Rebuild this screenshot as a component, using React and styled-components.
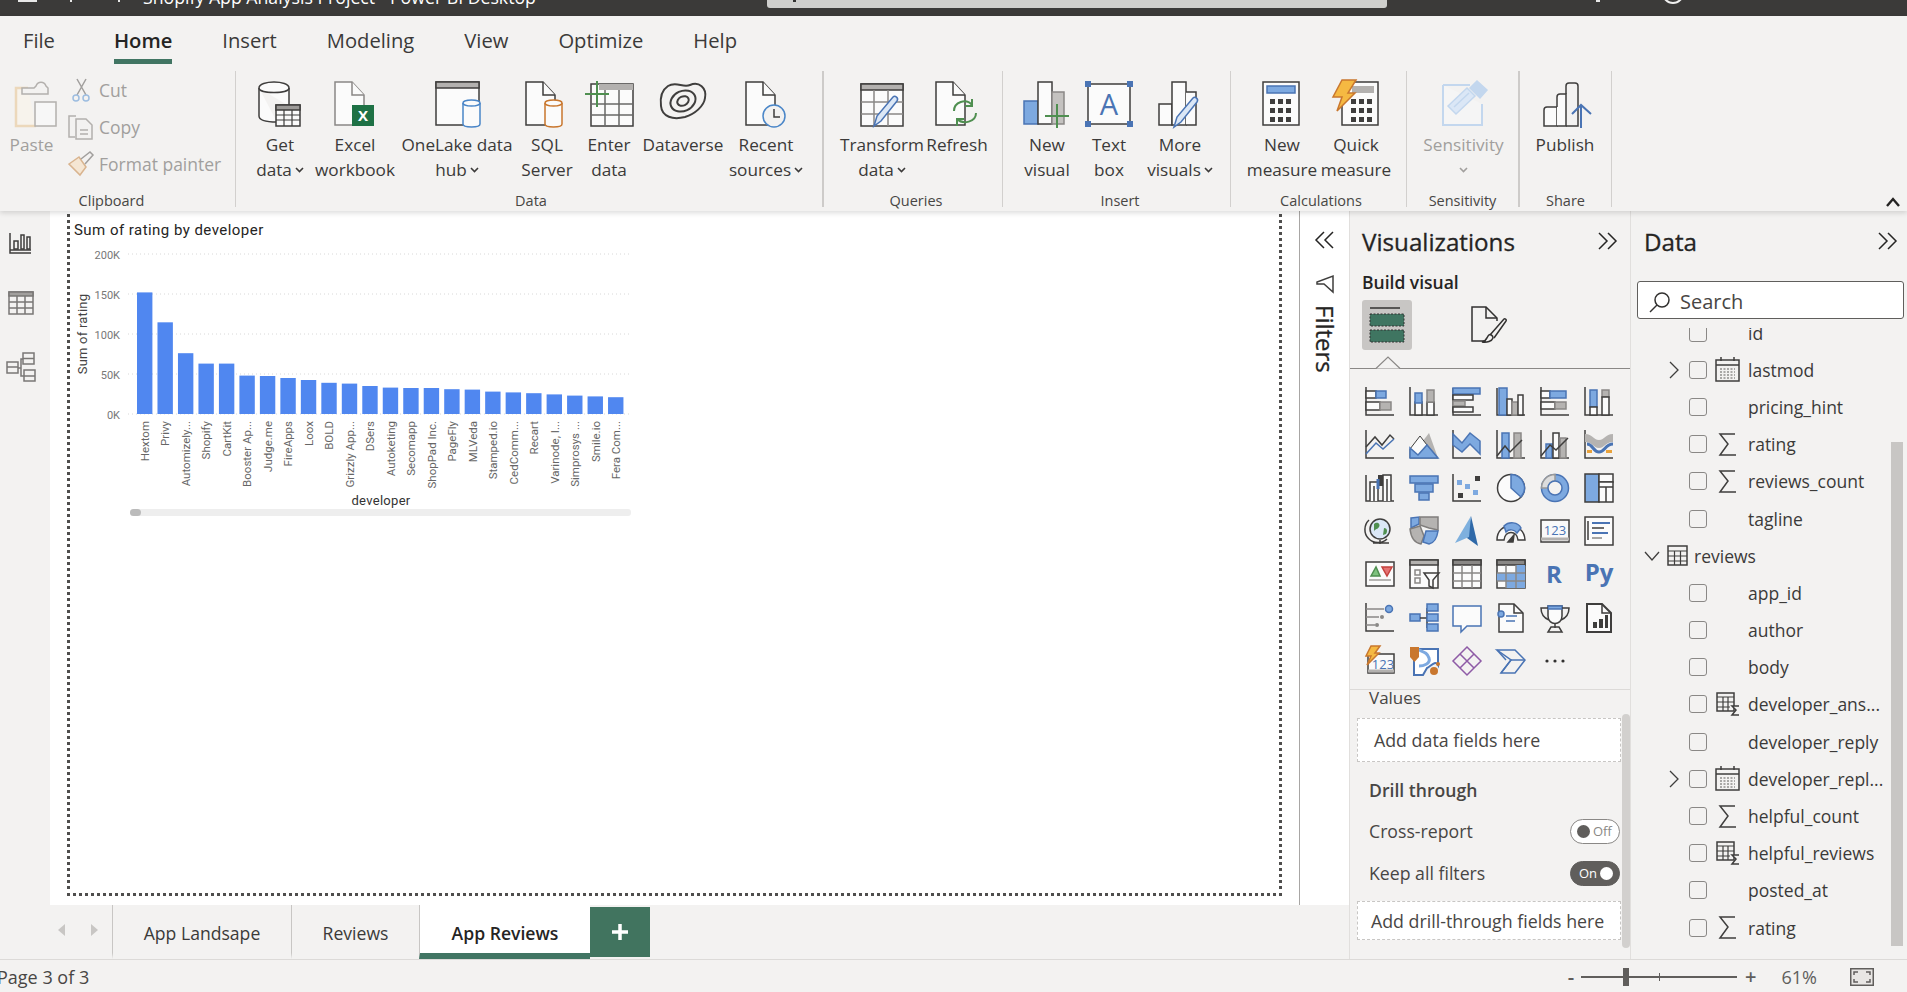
import React from "react";
import styled, { createGlobalStyle } from "styled-components";

const D = "#3f3e3d";
const M = "#605e5c";
const B = "#7da9e0";
const BS = "#4a74b4";
const G = "#b5b3b1";
const W = "#fbfbfb";
const GR = "#4f8f50";

const GlobalStyle = createGlobalStyle`
  html, body { margin: 0; padding: 0; background: #f3f2f1; overflow: hidden; }
  body { font-family: "Open Sans", "Noto Sans", sans-serif; color: #323130; }
`;

const App_ = styled.div`
  width: 1907px;
  height: 992px;
  display: flex;
  flex-direction: column;
  overflow: hidden;
  background: #f3f2f1;
`;

const TitleBar = styled.div`
  height: 16px;
  flex: none;
  background: #3b3a39;
  display: flex;
  overflow: hidden;
`;
const TitleBit = styled.div`
  width: ${p => p.$w}px;
  height: ${p => p.$h}px;
  margin-left: ${p => p.$ml}px;
  background: #e8e8e8;
  flex: none;
`;
const TitleText = styled.div`
  margin: -14px 0 0 ${p => p.$ml}px;
  width: 624px;
  color: #fff;
  font-size: 17.7px;
  line-height: 22px;
  white-space: nowrap;
  flex: none;
`;
const TitleSearch = styled.div`
  width: 620px;
  height: 8px;
  flex: none;
  background: #cfcfcd;
  border-radius: 0 0 3px 3px;
  padding-left: 26px;
  box-sizing: border-box;
`;
const TitleSearchMark = styled.div`
  width: 3px;
  height: 2px;
  background: #323130;
`;
const TitleAvatar = styled.div`
  width: 22px;
  height: 22px;
  margin: -18px 0 0 62px;
  border-radius: 50%;
  border: 2px solid #f0f0f0;
  box-sizing: border-box;
  flex: none;
`;

const Ribbon = styled.div`
  height: 195px;
  flex: none;
  background: #f3f2f1;
  box-shadow: 0 2px 5px rgba(0, 0, 0, 0.14);
  position: relative;
  z-index: 5;
`;
const TabBar = styled.div`
  height: 52px;
  padding-left: 23px;
  display: flex;
  gap: 50px;
`;
const Tab = styled.div`
  height: 48px;
  box-sizing: border-box;
  padding-top: 9px;
  font-size: 20.2px;
  line-height: 30px;
  color: ${p => (p.$active ? "#252423" : "#3b3a39")};
  font-weight: ${p => (p.$active ? 600 : 400)};
  border-bottom: 5px solid ${p => (p.$active ? "#417563" : "transparent")};
  margin-right: ${p => (p.$first ? "9px" : "0")};
`;
const Groups = styled.div`
  display: flex;
  margin-top: 3px;
  height: 136px;
`;
const Group = styled.div`
  width: ${p => p.$w}px;
  flex: none;
  box-sizing: border-box;
  padding-left: ${p => p.$pad || 0}px;
  border-right: ${p => (p.$thick ? "2px solid #cdcbc9" : "1px solid #d2d0ce")};
  display: flex;
  flex-direction: column;
  position: relative;
`;
const GroupBody = styled.div`
  flex: 1;
  min-height: 0;
  display: flex;
`;
const GroupLabel = styled.div`
  height: 22px;
  margin-bottom: -5px;
  margin-left: ${p => (p.$shift ? -p.$shift : 0)}px;
  text-align: center;
  font-size: 14.5px;
  line-height: 22px;
  color: #484644;
  flex: none;
`;
const RibbonBtn = styled.div`
  width: ${p => p.$w}px;
  flex: none;
  display: flex;
  flex-direction: column;
  align-items: center;
  color: ${p => (p.$off ? "#a19f9d" : "#3b3a39")};
`;
const IconSlot = styled.div`
  height: 48px;
  margin: 9px 0 4px;
  display: flex;
  justify-content: center;
`;
const BtnLine = styled.div`
  height: 25px;
  font-size: 17.2px;
  line-height: 25px;
  white-space: nowrap;
  display: flex;
  align-items: center;
  gap: 3px;
`;
const Stack = styled.div`
  margin-left: 15px;
  display: flex;
  flex-direction: column;
`;
const StackRow = styled.div`
  display: flex;
  align-items: center;
  height: 37px;
  gap: 5px;
  font-size: 17.5px;
  color: #a19f9d;
  white-space: nowrap;
`;
const StackIcon = styled.div`
  width: 26px;
  flex: none;
  display: flex;
  justify-content: center;
`;
const Collapse = styled.div`
  position: absolute;
  left: 1886px;
  top: 174px;
`;

const Main = styled.div`
  flex: 1;
  display: flex;
  min-height: 0;
`;
const LeftCol = styled.div`
  width: 1349px;
  flex: none;
  display: flex;
  flex-direction: column;
`;
const WorkRow = styled.div`
  flex: 1;
  display: flex;
  min-height: 0;
`;
const Rail = styled.div`
  width: 50px;
  flex: none;
  padding: 22px 9px 0 0;
  box-sizing: border-box;
  display: flex;
  flex-direction: column;
  align-items: center;
  gap: 37px;
`;
const Canvas = styled.div`
  flex: 1;
  background: #fff;
  padding: 0 17px 9px;
  display: flex;
  min-width: 0;
`;
const Frame = styled.div`
  flex: 1;
  margin-top: -10px;
  border: 3px dotted #4f4e4d;
  position: relative;
`;
const Visual = styled.svg`
  position: absolute;
  left: 0;
  top: 16px;
  font-family: Roboto, "Liberation Sans", sans-serif;
`;
const FiltersPane = styled.div`
  width: 50px;
  flex: none;
  background: #fff;
  border-left: 1px solid #a8a6a4;
  box-sizing: border-box;
  display: flex;
  flex-direction: column;
  align-items: center;
  padding-top: 19px;
`;
const Funnel = styled.div`
  margin-top: 25px;
  display: flex;
`;
const FiltersText = styled.div`
  writing-mode: vertical-rl;
  font-size: 24px;
  line-height: 26px;
  font-weight: 500;
  -webkit-text-stroke: 0.3px #252423;
  margin-top: 12px;
  color: #252423;
`;

const TabStrip = styled.div`
  height: 54px;
  flex: none;
  display: flex;
  box-sizing: border-box;
`;
const NavArrows = styled.div`
  width: 112px;
  flex: none;
  box-sizing: border-box;
  padding-left: 58px;
  display: flex;
  align-items: center;
  gap: 26px;
  padding-bottom: 4px;
`;
const PageTab = styled.div`
  width: ${p => p.$w}px;
  flex: none;
  box-sizing: border-box;
  display: flex;
  align-items: center;
  justify-content: center;
  border-left: 1px solid #c8c6c4;
  font-size: 17.6px;
  font-weight: ${p => (p.$active ? 600 : 400)};
  color: ${p => (p.$active ? "#252423" : "#3b3a39")};
  background: ${p => (p.$active ? "#fff" : "transparent")};
  border-bottom: 6px solid ${p => (p.$active ? "#417563" : "transparent")};
  padding-top: 8px;
`;
const AddTab = styled.div`
  width: 60px;
  height: 50px;
  margin-top: 2px;
  flex: none;
  background: #41745f;
  color: #fff;
  display: flex;
  align-items: center;
  justify-content: center;
`;

const Pane = styled.div`
  width: ${p => p.$w}px;
  flex: none;
  box-sizing: border-box;
  border-left: 1px solid #e1dfdd;
  display: flex;
  flex-direction: column;
  position: relative;
  overflow: hidden;
`;
const PaneHead = styled.div`
  height: 60px;
  flex: none;
  box-sizing: border-box;
  padding: 0 ${p => p.$r}px 0 ${p => p.$l}px;
  display: flex;
  align-items: center;
  justify-content: space-between;
  font-size: 24.2px;
  font-weight: 500;
  -webkit-text-stroke: 0.3px #252423;
  color: #252423;
`;
const BuildLabel = styled.div`
  height: 22px;
  line-height: 22px;
  padding-left: 12px;
  font-size: 17.5px;
  font-weight: 600;
  color: #252423;
`;
const BuildTabs = styled.div`
  display: flex;
  align-items: center;
  margin: 7px 0 0 12px;
  height: 50px;
`;
const BuildSelected = styled.div`
  width: 50px;
  height: 50px;
  background: #c8c6c4;
  border-radius: 3px;
  display: flex;
  align-items: center;
  justify-content: center;
`;
const BuildOther = styled.div`
  margin-left: 58px;
  display: flex;
`;
const NotchLine = styled.div`
  margin-top: 18px;
  height: 1px;
  background: #8a8886;
  position: relative;
  flex: none;
`;
const NotchMark = styled.svg`
  position: absolute;
  left: 25px;
  top: -12px;
`;
const VizGrid = styled.div`
  display: grid;
  grid-template-columns: repeat(6, 43.8px);
  grid-auto-rows: 43.2px;
  padding: 11px 0 0 8px;
  height: 320px;
  box-sizing: border-box;
  place-items: center;
  flex: none;
`;
const Rule = styled.div`
  height: 1px;
  flex: none;
  background: #dcdad8;
`;
const Values = styled.div`
  height: 16px;
  line-height: 16px;
  padding-left: 19px;
  font-size: 17px;
  color: #484644;
  flex: none;
`;
const DropBox = styled.div`
  width: 264px;
  height: ${p => p.$h}px;
  margin: ${p => p.$mt}px 0 0 7px;
  box-sizing: border-box;
  background: #fff;
  border: 1px dashed #c8c6c4;
  display: flex;
  align-items: center;
  padding-left: ${p => p.$pl}px;
  font-size: 17.8px;
  color: #484644;
  flex: none;
`;
const DrillHead = styled.div`
  height: 28px;
  margin-top: 14px;
  line-height: 28px;
  padding-left: 19px;
  font-size: 17.6px;
  font-weight: 600;
  color: #484644;
  flex: none;
`;
const OptionRow = styled.div`
  width: 251px;
  height: 26px;
  margin: ${p => p.$mt}px 0 0 19px;
  display: flex;
  align-items: center;
  justify-content: space-between;
  font-size: 17.7px;
  color: #484644;
  flex: none;
`;
const Toggle = styled.div`
  width: 50px;
  height: 25px;
  box-sizing: border-box;
  border-radius: 13px;
  border: 1px solid ${p => (p.$on ? "#605e5c" : "#8a8886")};
  background: ${p => (p.$on ? "#605e5c" : "#fff")};
  color: ${p => (p.$on ? "#fff" : "#8a8886")};
  font-size: 13px;
  display: flex;
  align-items: center;
  justify-content: ${p => (p.$on ? "flex-end" : "flex-start")};
  gap: 3px;
  padding: 0 6px;
`;
const Dot = styled.span`
  width: 13px;
  height: 13px;
  border-radius: 50%;
  background: ${p => (p.$on ? "#fff" : "#605e5c")};
  flex: none;
`;
const ScrollThumb = styled.div`
  position: absolute;
  right: ${p => p.$r}px;
  top: ${p => p.$t}px;
  height: ${p => p.$h}px;
  width: ${p => p.$w}px;
  border-radius: ${p => p.$rad || 0}px;
  background: ${p => p.$c};
`;
const SearchBox = styled.div`
  width: 267px;
  height: 38px;
  margin: 10px 0 0 6px;
  box-sizing: border-box;
  background: #fff;
  border: 1px solid #605e5c;
  border-radius: 3px;
  display: flex;
  align-items: center;
  gap: 9px;
  padding: 3px 0 0 11px;
  font-size: 20px;
  color: #484644;
  flex: none;
`;
const FieldClip = styled.div`
  margin-top: 9px;
  flex: 1;
  min-height: 0;
  overflow: hidden;
`;
const FieldList = styled.div`
  margin-top: -14px;
`;
const FieldRow = styled.div`
  height: 37.2px;
  display: flex;
  align-items: center;
  padding-left: 34px;
  font-size: 17.5px;
  color: #3b3a39;
  white-space: nowrap;
`;
const TableRow = styled(FieldRow)`
  padding-left: 12px;
  gap: 6px;
`;
const Chevron = styled.div`
  width: 18px;
  flex: none;
  display: flex;
  justify-content: center;
`;
const Check = styled.div`
  width: 18px;
  height: 18px;
  margin-left: 6px;
  box-sizing: border-box;
  border: 1px solid #8a8886;
  border-radius: 3px;
  flex: none;
`;
const FieldIcon = styled.div`
  width: 41px;
  flex: none;
  display: flex;
  justify-content: center;
`;

const StatusBar = styled.div`
  height: 33px;
  flex: none;
  border-top: 1px solid #dcdad8;
  box-sizing: border-box;
  display: flex;
  align-items: center;
  justify-content: space-between;
  font-size: 18px;
  color: #484644;
  padding: 2px 33px 0 0;
`;
const PageNo = styled.div`
  margin-left: -3px;
`;
const ZoomBox = styled.div`
  display: flex;
  align-items: center;
  color: ${M};
`;
const ZoomSign = styled.div`
  font-size: 20px;
  line-height: 20px;
  font-weight: 600;
`;
const Slider = styled.div`
  width: 156px;
  height: 2px;
  margin: 0 8px 0 7px;
  background: ${M};
  position: relative;
`;
const SliderThumb = styled.div`
  position: absolute;
  left: 42px;
  top: -8px;
  width: 6px;
  height: 18px;
  background: ${M};
`;
const SliderTick = styled.div`
  position: absolute;
  left: 78px;
  top: -3px;
  width: 1px;
  height: 8px;
  background: ${M};
`;
const Percent = styled.div`
  margin: 0 33px 0 25px;
  font-size: 18px;
`;
const IconSvg = styled.svg`
  overflow: visible;
  flex: none;
`;

const Svg = ({ w = 48, h = 48, vb, children }) => (
  <IconSvg width={w} height={h} viewBox={vb || `0 0 ${w} ${h}`} fill="none" strokeWidth="1.5" stroke={D}>
    {children}
  </IconSvg>
);

const Doc = ({ s = D, x = 6 }) => (
  <g transform={`translate(${x} 2)`} stroke={s}>
    <path d="M0 0H17L29 13V43H0Z" fill={W} />
    <path d="M17 0V13H29" fill={W} />
  </g>
);
const Pencil = ({ x = 0, y = 0 }) => (
  <path transform={`translate(${x} ${y})`} d="M0 30 3 20 19 1c2-2 6 1 4 4L7 25Z" fill="#dbe7f6" stroke={BS} />
);
const Cyl = ({ x, y, w, h, c }) => (
  <g stroke={c}>
    <path d={`M${x} ${y + 3}V${y + h - 3}c0 4 ${w} 4 ${w} 0V${y + 3}`} fill={W} />
    <ellipse cx={x + w / 2} cy={y + 3} rx={w / 2} ry="3" fill={W} />
  </g>
);
const CalcKeys = ({ x, y }) => (
  <g fill={D} stroke="none">
    {[0, 1, 2].map(r =>
      [0, 1, 2].map(c => <rect key={`${r}${c}`} x={x + c * 8} y={y + r * 9} width="5" height="5" />)
    )}
  </g>
);

const ribbonIcons = {
  getData: (
    <Svg>
      <path d="M3 8V36c0 5 9 6 18 6" fill={W} />
      <path d="M3 8c0-8 30-8 30 0V26" fill={W} />
      <path d="M3 8c0 6 30 6 30 0" />
      <rect x="20" y="25" width="24" height="21" fill={W} />
      <rect x="20" y="25" width="24" height="5" fill="#9c9a98" stroke={D} />
      <path d="M20 35H44M20 40H44M28 30V46M36 30V46" strokeWidth="1.2" />
    </Svg>
  ),
  excel: (
    <Svg>
      <Doc s="#8a8886" x={4} />
      <rect x="21" y="25" width="22" height="21" fill="#1e7145" stroke="none" />
      <text x="32" y="41" fontSize="15" fontWeight="700" fill="#fff" stroke="none" textAnchor="middle">X</text>
    </Svg>
  ),
  onelake: (
    <Svg>
      <rect x="3" y="2" width="43" height="43" fill={W} />
      <rect x="3" y="2" width="43" height="6" fill="#b3b1af" />
      <Cyl x={30} y={20} w={17} h={27} c="#4a86c8" />
    </Svg>
  ),
  sql: (
    <Svg>
      <Doc x={3} />
      <Cyl x={22} y={20} w={17} h={27} c="#c9772e" />
    </Svg>
  ),
  enter: (
    <Svg>
      <rect x="6" y="4" width="42" height="42" fill={W} />
      <rect x="14" y="4" width="34" height="6" fill="#b3b1af" stroke="none" />
      <path d="M6 24H48M6 35H48M20 10V46M34 10V46" stroke="#6a6968" />
      <path d="M0 14H24M12 1V27" stroke={GR} strokeWidth="2" />
    </Svg>
  ),
  dataverse: (
    <Svg>
      <path d="M9 6c8-5 15 2 22-1 9-4 17 3 15 13-1 8-10 16-20 19C14 40 3 37 2 26 1 18 3 10 9 6Z" strokeWidth="2" />
      <ellipse cx="24" cy="21" rx="13" ry="10" transform="rotate(-25 24 21)" strokeWidth="2" />
      <ellipse cx="24" cy="21" rx="6" ry="4.500" transform="rotate(-25 24 21)" strokeWidth="2" />
    </Svg>
  ),
  recent: (
    <Svg>
      <Doc x={4} />
      <circle cx="32" cy="36" r="11" fill="#f3f2f1" stroke="#4a86c8" />
      <path d="M32 29V37H38" />
    </Svg>
  ),
  transform: (
    <Svg>
      <rect x="3" y="4" width="42" height="42" fill={W} />
      <rect x="3" y="4" width="42" height="6" fill="#b3b1af" />
      <path d="M3 22H45M3 34H45M16 10V46M30 10V46" stroke="#8a8886" />
      <Pencil x={16} y={16} />
    </Svg>
  ),
  refresh: (
    <Svg>
      <Doc x={3} />
      <path d="M21 34c0-9 12-13 18-6M43 36c0 9-13 12-19 6M39 22V29H32M24 49V42H31" stroke={GR} strokeWidth="2" transform="translate(0 -3)" />
    </Svg>
  ),
  newVisual: (
    <Svg>
      <rect x="1" y="21" width="14" height="23" fill={B} stroke={BS} />
      <rect x="15" y="2" width="14" height="42" fill={W} />
      <rect x="29" y="12" width="12" height="32" fill="#c4c2c0" stroke="#8a8886" />
      <path d="M22 36H46M34 24V48" stroke={GR} strokeWidth="2" />
    </Svg>
  ),
  textBox: (
    <Svg>
      <rect x="3" y="4" width="42" height="40" fill={W} />
      <text x="24" y="35" fontSize="29" fill={BS} stroke="none" textAnchor="middle" fontFamily="Open Sans">A</text>
      <g fill={BS} stroke="none">
        <rect x="0" y="1" width="6" height="6" /><rect x="42" y="1" width="6" height="6" />
        <rect x="0" y="41" width="6" height="6" /><rect x="42" y="41" width="6" height="6" />
      </g>
    </Svg>
  ),
  moreVisuals: (
    <Svg>
      <rect x="3" y="24" width="13" height="21" fill={W} />
      <rect x="16" y="2" width="14" height="43" fill={W} />
      <path d="M30 12H40V45H30" fill={W} />
      <Pencil x={18} y={17} />
    </Svg>
  ),
  newMeasure: (
    <Svg>
      <rect x="5" y="2" width="36" height="43" fill={W} />
      <rect x="9" y="6" width="28" height="7" fill={B} stroke={BS} />
      <CalcKeys x={12} y={19} />
    </Svg>
  ),
  quickMeasure: (
    <Svg>
      <rect x="10" y="2" width="36" height="43" fill={W} />
      <rect x="20" y="6" width="22" height="7" fill="#b3b1af" stroke="none" />
      <CalcKeys x={19} y={19} />
      <path d="M10 0H24L16 13H23L5 31 10 17H1Z" fill="#f5b942" stroke="#c9772e" />
    </Svg>
  ),
  sensitivity: (
    <Svg>
      <path d="M3 5H30M42 24V45H3V5" stroke="#c3d7ee" strokeWidth="2" fill="#f5f5f5" />
      <path d="M8 26 27 8l8 8L16 34Z" fill="#dbe7f6" stroke="#c3d7ee" />
      <path d="M14 27 29 13" stroke="#c3d7ee" />
      <path d="M30 8 37 1l10 9-7 8Z" fill="#c3d7ee" stroke="#c3d7ee" />
    </Svg>
  ),
  publish: (
    <Svg>
      <path d="M3 46V30c0-2 1-3 3-3H16V46Z" fill={W} />
      <path d="M16 27V17c0-2 1-3 3-3h6V46H16" fill={W} />
      <path d="M25 14V6c0-2 1-3 3-3h6c2 0 3 1 3 3V46H25" />
      <path d="M40 48V26M31 34 40 25 50 34" stroke={BS} strokeWidth="2" />
    </Svg>
  ),
  paste: (
    <Svg w={52} h={48} vb="-8 0 52 48">
      <path d="M14 8H2V46H22" stroke="#ecd8bb" strokeWidth="2.500" fill="#f7f3ec" />
      <path d="M8 8H20l2-2c2-5 8-5 10 0l2 2V14H8Z" stroke="#b3b0ad" fill="#f3f2f1" />
      <rect x="21" y="22" width="21" height="24" stroke="#b3b0ad" fill="#f7f7f7" />
    </Svg>
  )
};

const vizIcons = [
  <>
    <path d="M1 0V28H29" />
    <rect x="1" y="4" width="10" height="7" fill={W} /><rect x="11" y="4" width="10" height="7" fill={B} stroke={BS} />
    <rect x="1" y="15" width="14" height="8" fill={W} /><rect x="15" y="15" width="11" height="8" fill={G} stroke="#8a8886" />
  </>,
  <>
    <path d="M1 0V28H29" />
    <rect x="6" y="15" width="7" height="13" fill={W} /><rect x="6" y="6" width="7" height="10" fill={B} stroke={BS} />
    <rect x="18" y="15" width="7" height="13" fill={W} /><rect x="18" y="3" width="7" height="12" fill={G} stroke="#8a8886" />
  </>,
  <>
    <path d="M1 1V28H29" />
    <rect x="1" y="1" width="27" height="6" fill={B} stroke={BS} />
    <rect x="1" y="8" width="20" height="5" fill={W} />
    <rect x="1" y="14" width="12" height="5" fill={G} stroke="#8a8886" />
    <rect x="1" y="20" width="20" height="5" fill={W} />
  </>,
  <>
    <path d="M1 1V28H29" />
    <rect x="3" y="1" width="8" height="27" fill={B} stroke={BS} />
    <rect x="11" y="12" width="5" height="16" fill={W} />
    <rect x="16" y="15" width="6" height="13" fill={G} stroke="#8a8886" />
    <rect x="22" y="8" width="5" height="20" fill={W} />
  </>,
  <>
    <path d="M1 0V28H29" />
    <rect x="1" y="4" width="9" height="7" fill={W} /><rect x="10" y="4" width="16" height="7" fill={B} stroke={BS} />
    <rect x="1" y="15" width="14" height="7" fill={W} /><rect x="15" y="15" width="11" height="7" fill={G} stroke="#8a8886" />
  </>,
  <>
    <path d="M1 0V28H29" />
    <rect x="6" y="3" width="7" height="17" fill={B} stroke={BS} /><rect x="6" y="20" width="7" height="8" fill={W} />
    <rect x="18" y="3" width="7" height="7" fill={G} stroke="#8a8886" /><rect x="18" y="10" width="7" height="18" fill={W} />
  </>,
  <>
    <path d="M1 0V28H29" />
    <path d="M1 17 10 7 17 15 25 5 29 9" />
    <path d="M1 24 11 13 18 19 29 9" stroke={BS} />
  </>,
  <>
    <path d="M20 3 29 28H1Z" fill={G} stroke="none" />
    <path d="M1 28V19L11 6l7 9 3 5 8 8Z" fill={W} stroke={D} strokeWidth="1" />
    <path d="M1 28V18l8 7 9-10 11 13Z" fill={B} stroke={BS} />
  </>,
  <>
    <path d="M1 0V28H29" />
    <path d="M1 4 10 13 18 3 28 11V24L18 14 10 22 1 15Z" fill={B} stroke={BS} />
  </>,
  <>
    <path d="M1 0V28H29" />
    <rect x="6" y="3" width="7" height="25" fill={B} stroke={BS} />
    <rect x="18" y="3" width="7" height="25" fill={G} stroke="#8a8886" />
    <path d="M1 26 9 16 14 22 26 10" />
  </>,
  <>
    <path d="M1 0V28H29" />
    <rect x="6" y="14" width="6" height="14" fill={B} stroke={BS} />
    <rect x="13" y="3" width="6" height="25" fill={W} />
    <rect x="20" y="8" width="6" height="20" fill={G} stroke="#8a8886" />
    <path d="M1 26 10 15 16 20 28 8" />
  </>,
  <>
    <path d="M1 0V28H29" />
    <path d="M1 4c8 0 8 6 14 6s6-6 14-6V12c-8 0-8 6-14 6S9 12 1 12Z" fill={G} stroke="none" />
    <path d="M3 14c6 0 6 8 12 8s6-8 14-8" stroke={BS} strokeWidth="3" />
    <path d="M3 20h5v3H3ZM22 20h6v3h-6Z" fill="#e9a23b" stroke="none" />
  </>,
  <>
    <path d="M1 2V28H29" />
    <path d="M5 28V9H13V28" fill={W} />
    <rect x="13" y="2" width="5" height="11" fill={D} stroke="none" />
    <path d="M9 28V13" />
    <path d="M18 28V2H26V28M22 28V6" fill={W} />
    <path d="M13 16V6" stroke={BS} strokeWidth="3" />
  </>,
  <>
    <rect x="1" y="3" width="28" height="7" fill={B} stroke={BS} />
    <rect x="6" y="11" width="18" height="8" fill={B} stroke={BS} />
    <rect x="10" y="20" width="10" height="7" fill={B} stroke={BS} />
  </>,
  <>
    <path d="M1 1V28H29" />
    <rect x="23" y="3" width="5" height="5" fill={D} stroke="none" />
    <rect x="5" y="7" width="5" height="5" fill={B} stroke="none" />
    <rect x="13" y="11" width="5" height="5" fill={B} stroke="none" />
    <rect x="6" y="20" width="5" height="5" fill={D} stroke="none" />
    <rect x="21" y="17" width="5" height="5" fill={B} stroke="none" />
  </>,
  <>
    <circle cx="15" cy="15" r="13.5" fill={W} />
    <path d="M15 1.5A13.5 13.5 0 0 1 25 24L15 15Z" fill={B} stroke={BS} />
  </>,
  <>
    <circle cx="15" cy="15" r="13.5" fill={B} stroke={BS} />
    <path d="M15 1.5A13.5 13.5 0 0 0 1.5 15H8A7 7 0 0 1 15 8Z" fill="#ddd" stroke="#999" />
    <circle cx="15" cy="15" r="7" fill="#f3f2f1" stroke={BS} />
  </>,
  <>
    <rect x="1" y="1" width="14" height="28" fill={B} stroke={D} />
    <rect x="15" y="1" width="14" height="8" fill={W} stroke={D} />
    <rect x="15" y="9" width="14" height="20" fill={W} stroke={D} />
    <path d="M15 14H29M22 14V29" />
  </>,
  <>
    <path d="M4 4A12 12 0 1 0 22 23M8 27H24M15 24V28" />
    <circle cx="15" cy="13" r="10" fill="#dbe7f6" stroke={D} />
    <path d="M9 8c3-3 7 0 5 3s-5 2-5 5M19 12c3 0 4 3 2 6l-3 1Z" fill="#4f8f50" stroke="none" />
  </>,
  <>
    <path d="M2 2 10 1V8L2 12Z" fill={B} stroke={BS} />
    <path d="M11 1H29V14L20 12 11 9Z" fill={G} stroke="#807e7c" />
    <path d="M1 13 11 10 15 20 12 28C6 27 2 22 1 13Z" fill={G} stroke="#807e7c" />
    <path d="M17 15 29 15C28 22 25 27 20 28L14 26Z" fill={B} stroke={BS} />
  </>,
  <>
    <path d="M19 0 26 30 15 22Z" fill="#2f69a8" stroke="none" />
    <path d="M19 0 3 27 17 21Z" fill="#7eb0de" stroke="none" />
  </>,
  <>
    <path d="M1 24C1 5 28 5 29 24H22C21 14 9 14 8 24Z" fill={W} />
    <path d="M8 10C13 5 22 6 25 12L21 17C18 13 13 13 10 16Z" fill={B} stroke={BS} />
    <path d="M12 26 18 19 17 26Z" fill={D} />
  </>,
  <>
    <rect x="1" y="4" width="28" height="22" fill="#f9f9f9" />
    <path d="M1 23H29" strokeWidth="3" stroke="#b3b1af" />
    <text x="15" y="19" fontSize="13" textAnchor="middle" fill={BS} stroke="none">123</text>
  </>,
  <>
    <rect x="1" y="1" width="28" height="28" fill={W} />
    <path d="M4 5V24M8 7H26M8 12H20" />
    <path d="M8 7H26M8 17H24" stroke={BS} strokeWidth="2" />
    <path d="M8 22H18" stroke="#8a8886" />
  </>,
  <>
    <rect x="1" y="3" width="28" height="24" fill={W} />
    <path d="M6 17 11 8 15 17Z" fill="#7ec27e" stroke={GR} />
    <path d="M17 8H27L22 17Z" fill="#e57373" stroke="#c4423e" />
    <path d="M4 21H26" stroke="#a19f9d" />
  </>,
  <>
    <rect x="1" y="1" width="28" height="28" fill={W} />
    <rect x="1" y="1" width="28" height="5" fill="#b3b1af" />
    <rect x="6" y="11" width="5" height="5" stroke="#8a8886" /><rect x="6" y="19" width="5" height="5" stroke="#8a8886" />
    <path d="M15 14H30L24 21V29L20 27V21Z" fill={W} />
  </>,
  <>
    <rect x="1" y="1" width="28" height="28" fill={W} />
    <rect x="1" y="1" width="28" height="5" fill="#8a8886" />
    <path d="M1 14H29M1 22H29M10 6V29M20 6V29" stroke="#8a8886" />
  </>,
  <>
    <rect x="1" y="1" width="28" height="28" fill={W} />
    <rect x="1" y="1" width="28" height="5" fill="#8a8886" />
    <rect x="1" y="14" width="9" height="8" fill={B} stroke="none" /><rect x="20" y="6" width="9" height="8" fill={B} stroke="none" />
    <rect x="20" y="14" width="9" height="8" fill={B} stroke="none" /><rect x="10" y="14" width="10" height="8" fill={B} stroke="none" />
    <rect x="10" y="22" width="10" height="7" fill={B} stroke="none" /><rect x="20" y="22" width="9" height="7" fill={B} stroke="none" />
    <path d="M1 14H29M1 22H29M10 6V29M20 6V29" stroke="#8a8886" />
  </>,
  <text x="14" y="24" fontSize="24" fontWeight="700" textAnchor="middle" fill={BS} stroke="none" fontFamily="Open Sans">R</text>,
  <text x="15" y="22" fontSize="24" fontWeight="700" textAnchor="middle" fill={BS} stroke="none" fontFamily="Open Sans">Py</text>,
  <>
    <path d="M1 0V28H29" />
    <path d="M1 6H19M1 14H14M1 22H10" stroke="#8a8886" />
    <circle cx="24" cy="6" r="3.5" fill={B} stroke={BS} />
    <circle cx="17" cy="14" r="2" fill="#8a8886" stroke="none" />
    <circle cx="12" cy="22" r="2" fill="#8a8886" stroke="none" />
  </>,
  <>
    <rect x="1" y="11" width="10" height="7" fill={B} stroke={BS} />
    <path d="M11 15H18M18 5V25" />
    <rect x="18" y="1" width="11" height="7" fill={B} stroke={BS} />
    <rect x="18" y="11" width="11" height="7" fill={B} stroke={BS} />
    <rect x="18" y="21" width="11" height="7" fill={B} stroke={BS} />
  </>,
  <path d="M1 3H29V23H15L9 29V23H1Z" fill={W} stroke={BS} />,
  <>
    <path d="M3 1H18L27 10V29H3Z" fill={W} />
    <path d="M18 1V10H27" />
    <circle cx="5" cy="11" r="3" fill={B} stroke={BS} />
    <path d="M10 13H21M10 18H19" stroke={BS} />
  </>,
  <>
    <path d="M8 3H22V13C22 23 8 23 8 13Z" fill={W} />
    <path d="M8 3H22V6H8Z" fill={B} stroke={BS} />
    <path d="M8 5H1C1 12 4 15 9 17M22 5H29C29 12 26 15 21 17M15 20V25M8 29H22L19 24H11Z" />
  </>,
  <>
    <path d="M3 1H18L27 10V29H3Z" fill={W} stroke={D} strokeWidth="2" />
    <path d="M18 1V10H27" />
    <path d="M9 25V19H13V25ZM15 25V16H19V25ZM21 25V12H24V25Z" fill={D} stroke="none" />
  </>,
  <>
    <rect x="3" y="8" width="26" height="19" fill="#f9f9f9" />
    <path d="M3 25H29" strokeWidth="3" stroke="#b3b1af" />
    <text x="18" y="23" fontSize="13" textAnchor="middle" fill={BS} stroke="none">123</text>
    <path d="M6 0H15L10 7H14L2 19 6 10H1Z" fill="#f5b942" stroke="#c9772e" />
  </>,
  <>
    <path d="M5 3H29V19C26 14 22 20 18 22L14 29H5Z" fill="#fff" stroke={BS} strokeWidth="2" />
    <path d="M8 3C14 6 18 6 20 12S14 20 10 20" stroke={B} strokeWidth="3" />
    <path d="M1 1H10V11L5.5 16 1 11Z" fill="#c9772e" stroke="none" />
    <circle cx="25" cy="25" r="4" fill="#c9772e" stroke="none" />
    <circle cx="29" cy="18" r="2" fill="#c9772e" stroke="none" />
  </>,
  <g stroke="#8e5ba6">
    <path d="M15 1 29 15 15 29 1 15Z" fill="none" />
    <path d="M8 8 22 22M22 8 8 22" />
  </g>,
  <g stroke={BS}>
    <path d="M1 4H19L29 14 19 27H5L15 14Z" fill="none" />
    <path d="M1 4 10 14M15 14H29M5 27 15 14" />
  </g>,
  <g fill="#323130" stroke="none">
    <circle cx="7" cy="15" r="1.6" /><circle cx="15" cy="15" r="1.6" /><circle cx="23" cy="15" r="1.6" />
  </g>
];

const Calendar = () => (
  <Svg w={25} h={25}>
    <rect x="1" y="3" width="23" height="21" fill="none" />
    <path d="M1 8H24M6 0V4M19 0V4" />
    <path d="M5 12H20M5 15H20M5 18H20M5 21H20" strokeDasharray="2 1.5" stroke="#605e5c" strokeWidth="1.2" />
  </Svg>
);
const Sigma = () => (
  <Svg w={20} h={25}>
    <path d="M17 2H2L10 12 2 23H18" />
  </Svg>
);
const TableSigma = () => (
  <Svg w={24} h={24}>
    <rect x="1" y="1" width="17" height="18" />
    <path d="M1 5H18M1 10H18M1 15H14M7 5V19M12 5V19" strokeWidth="1.2" />
    <path d="M23 14H16L20 18 16 23H23" fill="#f3f2f1" />
  </Svg>
);
const Table = () => (
  <Svg w={21} h={21}>
    <rect x="1" y="1" width="19" height="19" />
    <path d="M1 6H20M1 11H20M1 16H20M7.5 6V20M13.5 6V20" strokeWidth="1.2" />
  </Svg>
);
const ChevRight = () => (
  <Svg w={10} h={18}>
    <path d="M1 1 9 9 1 17" strokeWidth="1.3" />
  </Svg>
);
const ChevDown = () => (
  <Svg w={16} h={10}>
    <path d="M1 1 8 9 15 1" strokeWidth="1.3" />
  </Svg>
);
const Double = ({ left }) => (
  <Svg w={20} h={20}>
    <path d={left ? "M9 2 1 10 9 18M18 2 10 10 18 18" : "M2 2 10 10 2 18M11 2 19 10 11 18"} strokeWidth="1.5" stroke="#252423" />
  </Svg>
);
const Caret = ({ off }) => (
  <svg width="9" height="6" viewBox="0 0 9 6" fill="none" stroke={off ? "#a19f9d" : "#3b3a39"} strokeWidth="1.6">
    <path d="M1 1 4.500 4.500 8 1" />
  </svg>
);

const fields = [
  { name: "id" },
  { name: "lastmod", icon: "cal", exp: true },
  { name: "pricing_hint" },
  { name: "rating", icon: "sum" },
  { name: "reviews_count", icon: "sum" },
  { name: "tagline" },
  { table: "reviews" },
  { name: "app_id" },
  { name: "author" },
  { name: "body" },
  { name: "developer_ans...", icon: "tsum" },
  { name: "developer_reply" },
  { name: "developer_repl...", icon: "cal", exp: true },
  { name: "helpful_count", icon: "sum" },
  { name: "helpful_reviews", icon: "tsum" },
  { name: "posted_at" },
  { name: "rating", icon: "sum" }
];
const fieldIcons = { cal: <Calendar />, sum: <Sigma />, tsum: <TableSigma /> };

const groups = [
  {
    label: "Data", w: 588, pad: 4, thick: true,
    items: [
      ["getData", 80, "Get", "data", true], ["excel", 70, "Excel", "workbook"],
      ["onelake", 134, "OneLake data", "hub", true], ["sql", 46, "SQL", "Server"],
      ["enter", 78, "Enter", "data"], ["dataverse", 70, "Dataverse"],
      ["recent", 96, "Recent", "sources", true]
    ]
  },
  {
    label: "Queries", w: 179, pad: 6,
    items: [["transform", 104, "Transform", "data", true], ["refresh", 46, "Refresh"]]
  },
  {
    label: "Insert", w: 228, pad: 7,
    items: [["newVisual", 74, "New", "visual"], ["textBox", 50, "Text", "box"], ["moreVisuals", 92, "More", "visuals", true]]
  },
  {
    label: "Calculations", w: 176, pad: 5,
    items: [["newMeasure", 92, "New", "measure"], ["quickMeasure", 56, "Quick", "measure"]]
  },
  {
    label: "Sensitivity", w: 113, thick: true,
    items: [["sensitivity", 113, "Sensitivity", "", true, true]]
  },
  { label: "Share", w: 92, items: [["publish", 90, "Publish"]] }
];

const bars = [
  ["Hextom", 152], ["Privy", 114.6], ["Automizely...", 76], ["Shopify", 63], ["CartKit", 63], ["Booster Ap...", 48],
  ["Judge.me", 47.5], ["FireApps", 45], ["Loox", 42.5], ["BOLD", 39], ["Grizzly App...", 38], ["DSers", 35],
  ["Autoketing", 33], ["Secomapp", 32.5], ["ShopPad Inc.", 32.5], ["PageFly", 31], ["MLVeda", 30.5], ["Stamped.io", 28],
  ["CedComm...", 27], ["Recart", 26], ["Varinode, I...", 24.5], ["Simprosys ...", 23], ["Smile.io", 22], ["Fera Com...", 21]
];

const Chart = () => (
  <Visual width="600" height="320" viewBox="70 220 600 320">
    <text x="74" y="235" fontSize="15" letterSpacing="0.46" fill="#252423">Sum of rating by developer</text>
    {[0, 50, 100, 150, 200].map(v => {
      const y = 414 - v * 0.8;
      return (
        <g key={v}>
          <line x1="128" x2="630" y1={y} y2={y} stroke="#d8d8d8" strokeDasharray="1 3" />
          <text x="120" y={y + 4.5} textAnchor="end" fontSize="11" fill="#777">{v}K</text>
        </g>
      );
    })}
    {bars.map(([name, v], i) => {
      const x = 137 + i * 20.48;
      const h = v * 0.8;
      return (
        <g key={name}>
          <rect x={x} y={414 - h} width="15.4" height={h} fill="#5087f0" />
          <text transform={`translate(${x + 12} 421) rotate(-90)`} textAnchor="end" fontSize="11.5" fill="#666">{name}</text>
        </g>
      );
    })}
    <text transform="translate(87 334) rotate(-90)" textAnchor="middle" fontSize="13" letterSpacing="0.2" fill="#444">Sum of rating</text>
    <text x="381" y="505" textAnchor="middle" fontSize="13" letterSpacing="0.3" fill="#333">developer</text>
    <rect x="130" y="509" width="501" height="7" rx="3" fill="#eeeeee" />
    <rect x="130" y="509" width="11" height="7" rx="3.500" fill="#bbb" />
  </Visual>
);

const Field = ({ f }) =>
  f.table ? (
    <TableRow>
      <Chevron><ChevDown /></Chevron>
      <Table />
      {f.table}
    </TableRow>
  ) : (
    <FieldRow>
      <Chevron>{f.exp && <ChevRight />}</Chevron>
      <Check />
      <FieldIcon>{f.icon && fieldIcons[f.icon]}</FieldIcon>
      {f.name}
    </FieldRow>
  );

export default function App() {
  return (
    <App_>
      <GlobalStyle />
      <TitleBar>
        <TitleBit $w={19} $h={2} $ml={18} />
        <TitleBit $w={2} $h={2} $ml={33} />
        <TitleBit $w={2} $h={2} $ml={46} />
        <TitleText $ml={23}>Shopify App Analysis Project - Power BI Desktop</TitleText>
        <TitleSearch>
          <TitleSearchMark />
        </TitleSearch>
        <TitleBit $w={4} $h={2} $ml={209} />
        <TitleAvatar />
      </TitleBar>

      <Ribbon>
        <TabBar>
          <Tab $first>File</Tab>
          <Tab $active>Home</Tab>
          <Tab>Insert</Tab>
          <Tab>Modeling</Tab>
          <Tab>View</Tab>
          <Tab>Optimize</Tab>
          <Tab>Help</Tab>
        </TabBar>
        <Groups>
          <Group $w={236} $pad={10}>
            <GroupBody>
              <RibbonBtn $w={43} $off>
                <IconSlot>{ribbonIcons.paste}</IconSlot>
                <BtnLine>Paste</BtnLine>
              </RibbonBtn>
              <Stack>
                <StackRow>
                  <StackIcon>
                    <Svg w={19} h={24}>
                      <path d="M5 1 14 17M14 1 5 17" stroke="#a19f9d" />
                      <circle cx="4" cy="20" r="3" stroke="#9dbde0" /><circle cx="14" cy="20" r="3" stroke="#9dbde0" />
                    </Svg>
                  </StackIcon>
                  Cut
                </StackRow>
                <StackRow>
                  <StackIcon>
                    <Svg w={26} h={26}>
                      <path d="M8 2H1V23H7" stroke="#b3b0ad" />
                      <path d="M8 5H18L24 11V25H8Z" stroke="#b3b0ad" />
                      <path d="M12 16H20M12 20H20" stroke="#b3b0ad" />
                    </Svg>
                  </StackIcon>
                  Copy
                </StackRow>
                <StackRow>
                  <StackIcon>
                    <Svg w={26} h={26}>
                      <path d="M1 13 11 6 18 16 12 24Z" fill="#f5e6d3" stroke="#d9b48f" />
                      <path d="M13 8 22 1 25 4 17 13" stroke="#a19f9d" />
                    </Svg>
                  </StackIcon>
                  Format painter
                </StackRow>
              </Stack>
            </GroupBody>
            <GroupLabel $shift={22}>Clipboard</GroupLabel>
          </Group>
          {groups.map(g => (
            <Group key={g.label} $w={g.w} $pad={g.pad} $thick={g.thick}>
              <GroupBody>
                {g.items.map(([icon, w, a, b, caret, off]) => (
                  <RibbonBtn key={icon} $w={w} $off={off}>
                    <IconSlot>{ribbonIcons[icon]}</IconSlot>
                    <BtnLine>{a}</BtnLine>
                    {(b || caret) && (
                      <BtnLine>
                        {b}
                        {caret && <Caret off={off} />}
                      </BtnLine>
                    )}
                  </RibbonBtn>
                ))}
              </GroupBody>
              <GroupLabel>{g.label}</GroupLabel>
            </Group>
          ))}
        </Groups>
        <Collapse>
          <Svg w={14} h={10}>
            <path d="M1 9 7 2 13 9" strokeWidth="2.4" stroke="#252423" />
          </Svg>
        </Collapse>
      </Ribbon>

      <Main>
        <LeftCol>
          <WorkRow>
            <Rail>
              <Svg w={23} h={21}>
                <path d="M1 0V20H22" />
                <path d="M5 16V8H9V16ZM12 16V2H15V16ZM18 16V4H21V16Z" />
                <path d="M1 17H22" />
              </Svg>
              <Svg w={26} h={24}>
                <rect x="1" y="1" width="24" height="22" stroke="#797775" />
                <rect x="1" y="1" width="24" height="4" fill="#a19f9d" stroke="#797775" />
                <path d="M1 11H25M1 17H25M9 5V23M17 5V23" stroke="#797775" />
              </Svg>
              <Svg w={30} h={30}>
                <g stroke="#797775">
                  <rect x="17" y="1" width="11" height="11" /><rect x="1" y="10" width="11" height="11" /><rect x="18" y="18" width="11" height="11" />
                  <path d="M12 16H15V7H17M15 16V24H18M17 6.500H28M1 15H12M18 24H29" />
                </g>
              </Svg>
            </Rail>
            <Canvas>
              <Frame>
                <Chart />
              </Frame>
            </Canvas>
            <FiltersPane>
              <Double left />
              <Funnel>
                <Svg w={18} h={18}>
                  <path d="M17 1V17L8 9H1V7ZM1 9H8" />
                </Svg>
              </Funnel>
              <FiltersText>Filters</FiltersText>
            </FiltersPane>
          </WorkRow>
          <TabStrip>
            <NavArrows>
              <svg width="7" height="12" viewBox="0 0 7 12" fill="#c8c6c4"><path d="M7 0V12L0 6Z" /></svg>
              <svg width="7" height="12" viewBox="0 0 7 12" fill="#c8c6c4"><path d="M0 0V12L7 6Z" /></svg>
            </NavArrows>
            <PageTab $w={179}>App Landsape</PageTab>
            <PageTab $w={128}>Reviews</PageTab>
            <PageTab $w={171} $active>App Reviews</PageTab>
            <AddTab>
              <Svg w={16} h={16}>
                <path d="M8 0V16M0 8H16" stroke="#fff" strokeWidth="3.5" />
              </Svg>
            </AddTab>
          </TabStrip>
        </LeftCol>

        <Pane $w={281}>
          <PaneHead $l={12} $r={13}>
            Visualizations
            <Double />
          </PaneHead>
          <BuildLabel>Build visual</BuildLabel>
          <BuildTabs>
            <BuildSelected>
              <Svg w={38} h={38}>
                <path d="M2 2H32" stroke="#323130" />
                <rect x="2" y="8" width="34" height="12" fill="#3f7561" stroke="#323130" strokeDasharray="2 1.5" strokeWidth="1" />
                <rect x="2" y="24" width="34" height="12" fill="#3f7561" stroke="#323130" strokeDasharray="2 1.5" strokeWidth="1" />
              </Svg>
            </BuildSelected>
            <BuildOther>
              <Svg w={38} h={38}>
                <path d="M16 35H2V1H16L27 12V15" stroke="#323130" />
                <path d="M16 1V12H27" stroke="#323130" />
                <path d="M20 29 34 13c1-1 3 1 2 2L24 32" stroke="#323130" />
                <path d="M12 36c5 1 10-1 11-4 0-3-3-4-4-3-2 1-2 6-7 7Z" stroke="#323130" />
              </Svg>
            </BuildOther>
          </BuildTabs>
          <NotchLine>
            <NotchMark width="26" height="13" viewBox="0 0 26 13" fill="#f3f2f1" stroke="#8a8886" strokeWidth="1.2">
              <path d="M0 12.500H1L13 1 25 12.500H26" />
            </NotchMark>
          </NotchLine>
          <VizGrid>
            {vizIcons.map((icon, i) => (
              <Svg key={i} w={30} h={30}>{icon}</Svg>
            ))}
          </VizGrid>
          <Rule />
          <Values>Values</Values>
          <DropBox $h={44} $mt={12} $pl={16}>Add data fields here</DropBox>
          <DrillHead>Drill through</DrillHead>
          <OptionRow $mt={14}>
            Cross-report
            <Toggle><Dot />Off</Toggle>
          </OptionRow>
          <OptionRow $mt={16}>
            Keep all filters
            <Toggle $on>On<Dot $on /></Toggle>
          </OptionRow>
          <DropBox $h={39} $mt={15} $pl={13}>Add drill-through fields here</DropBox>
          <ScrollThumb $r={0} $t={503} $h={234} $w={8} $rad={4} $c="#d2d0ce" />
        </Pane>

        <Pane $w={277}>
          <PaneHead $l={13} $r={10}>
            Data
            <Double />
          </PaneHead>
          <SearchBox>
            <Svg w={22} h={22}>
              <circle cx="13" cy="9" r="7" stroke="#323130" />
              <path d="M8 14 1 21" stroke="#323130" />
            </Svg>
            Search
          </SearchBox>
          <FieldClip>
            <FieldList>
              {fields.map((f, i) => (
                <Field key={i} f={f} />
              ))}
            </FieldList>
          </FieldClip>
          <ScrollThumb $r={4} $t={231} $h={504} $w={12} $c="#c8c6c4" />
        </Pane>
      </Main>

      <StatusBar>
        <PageNo>Page 3 of 3</PageNo>
        <ZoomBox>
          <ZoomSign>-</ZoomSign>
          <Slider>
            <SliderThumb />
            <SliderTick />
          </Slider>
          <ZoomSign>+</ZoomSign>
          <Percent>61%</Percent>
          <Svg w={24} h={18}>
            <rect x="0.750" y="0.750" width="22.500" height="16.500" stroke={M} fill="#e8e6e4" />
            <path d="M4 7V4H8M20 7V4H16M4 11V14H8M20 11V14H16" stroke={M} />
          </Svg>
        </ZoomBox>
      </StatusBar>
    </App_>
  );
}
